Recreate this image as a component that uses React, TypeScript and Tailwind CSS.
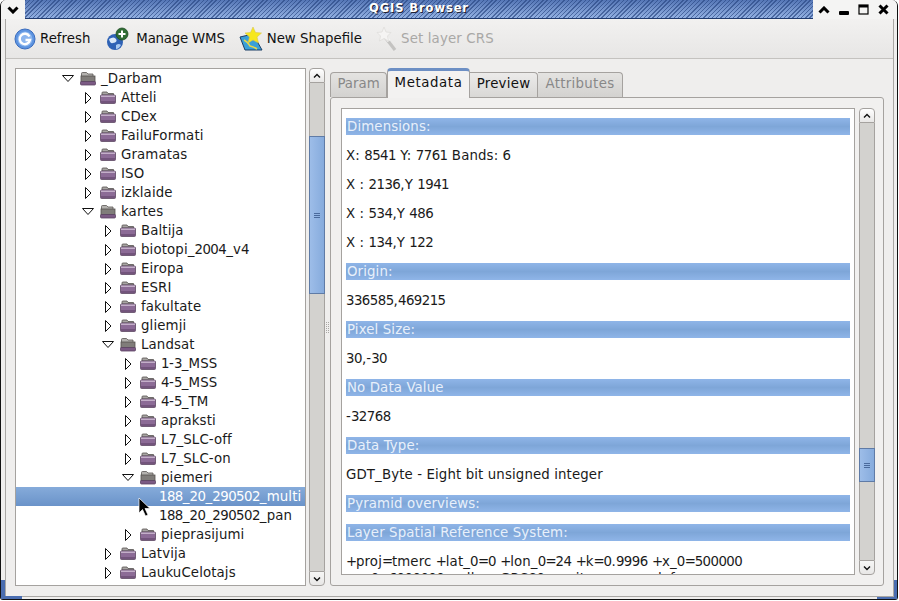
import React from "react";

type TreeRow = { label: string; indent: number; open?: boolean; leaf?: boolean; selected?: boolean };

const treeRows: TreeRow[] = [
  { label: "_Darbam", indent: 45, open: true },
  { label: "Atteli", indent: 65 },
  { label: "CDex", indent: 65 },
  { label: "FailuFormati", indent: 65 },
  { label: "Gramatas", indent: 65 },
  { label: "ISO", indent: 65 },
  { label: "izklaide", indent: 65 },
  { label: "kartes", indent: 65, open: true },
  { label: "Baltija", indent: 85 },
  { label: "biotopi_2004_v4", indent: 85 },
  { label: "Eiropa", indent: 85 },
  { label: "ESRI", indent: 85 },
  { label: "fakultate", indent: 85 },
  { label: "gliemji", indent: 85 },
  { label: "Landsat", indent: 85, open: true },
  { label: "1-3_MSS", indent: 105 },
  { label: "4-5_MSS", indent: 105 },
  { label: "4-5_TM", indent: 105 },
  { label: "apraksti", indent: 105 },
  { label: "L7_SLC-off", indent: 105 },
  { label: "L7_SLC-on", indent: 105 },
  { label: "piemeri", indent: 105, open: true },
  { label: "188_20_290502_multi", indent: 143, leaf: true, selected: true },
  { label: "188_20_290502_pan", indent: 143, leaf: true },
  { label: "pieprasijumi", indent: 105 },
  { label: "Latvija", indent: 85 },
  { label: "LaukuCelotajs", indent: 85 },
];

const metaRows: { text: string; head?: boolean }[] = [
  { text: "Dimensions:", head: true },
  { text: "X: 8541 Y: 7761 Bands: 6" },
  { text: "X : 2136,Y 1941" },
  { text: "X : 534,Y 486" },
  { text: "X : 134,Y 122" },
  { text: "Origin:", head: true },
  { text: "336585,469215" },
  { text: "Pixel Size:", head: true },
  { text: "30,-30" },
  { text: "No Data Value", head: true },
  { text: "-32768" },
  { text: "Data Type:", head: true },
  { text: "GDT_Byte - Eight bit unsigned integer" },
  { text: "Pyramid overviews:", head: true },
  { text: "Layer Spatial Reference System:", head: true },
];

// the screenshot font is hinted: digits and +/= come out narrower than ours
function Txt({ text }: { text: string }) {
  const parts = text.split(/(\d+|[+=]+)/).filter(Boolean);
  return (
    <span className="tracking-[0.12px]">
      {parts.map((p, i) =>
        /\d/.test(p) ? (
          <span key={i} className="tracking-[-0.55px]">{p}</span>
        ) : /[+=]/.test(p) ? (
          <span key={i} className="tracking-[-1.2px]">{p}</span>
        ) : (
          <span key={i}>{p}</span>
        )
      )}
    </span>
  );
}

function Folder({ open }: { open?: boolean }) {
  if (open) {
    return (
      <svg width="16" height="15" viewBox="0 0 16 15" className="shrink-0">
        <path d="M1.5 2.5 Q1.5 1.5 2.5 1.5 L6.5 1.5 L8 3 L13 3 L13 6 L1.5 6 Z" fill="#b4b2af" stroke="#5a5754" strokeWidth="0.8" />
        <rect x="1" y="5" width="14" height="6" fill="#807d7a" stroke="#55524f" strokeWidth="0.8" />
        <rect x="0.5" y="10.5" width="15" height="3.5" rx="1" fill="#7b5a84" stroke="#5a4262" strokeWidth="0.8" />
      </svg>
    );
  }
  return (
    <svg width="16" height="13" viewBox="0 0 16 13" className="shrink-0">
      <path d="M2 4 L2 1.8 Q2 1 3 1 L7 1 L8 2.5 L13.5 2.5 L13.5 4 Z" fill="#a8a6a3" stroke="#55524f" strokeWidth="0.8" />
      <rect x="0.5" y="4" width="15" height="8.5" rx="1" fill="#8c6b96" stroke="#5d4862" strokeWidth="0.8" />
      <rect x="1" y="4.5" width="14" height="1.5" fill="#c4afc9" />
      <rect x="1" y="10" width="14" height="2" fill="#73547c" />
    </svg>
  );
}

function Arrow({ open }: { open?: boolean }) {
  return open ? (
    <svg width="14" height="10" viewBox="0 0 14 10" className="shrink-0">
      <path d="M1.5 1.5 H12.5 L7 7.5 Z" fill="#fff" stroke="#111" strokeWidth="1" />
    </svg>
  ) : (
    <svg width="10" height="14" viewBox="0 0 10 14" className="shrink-0">
      <path d="M2.5 1.5 V12.5 L8 7 Z" fill="#fff" stroke="#111" strokeWidth="1" />
    </svg>
  );
}

function Row({ row }: { row: TreeRow }) {
  return (
    <div
      className={`h-[19px] flex items-center shrink-0 whitespace-nowrap ${
        row.selected ? "bg-gradient-to-b from-[#86abda] to-[#6a93c9] text-white" : "text-[#1a1a1a]"
      }`}
      style={{ paddingLeft: row.indent }}
    >
      {!row.leaf && (
        <div className="w-[14px] flex justify-center shrink-0">
          <Arrow open={row.open} />
        </div>
      )}
      {!row.leaf && (
        <div className="ml-[5px] mr-[5px] flex">
          <Folder open={row.open} />
        </div>
      )}
      <Txt text={row.label} />
    </div>
  );
}

function ScrollBar({ children }: { children: React.ReactNode }) {
  return (
    <div className="w-[16px] h-full flex flex-col shrink-0">
      <div className="h-[15px] border border-[#a5a29f] rounded-t-[4px] bg-gradient-to-b from-white to-[#e8e7e6] flex items-center justify-center shrink-0">
        <svg width="8" height="6" viewBox="0 0 8 6"><path d="M1 4.5 L4 1.5 L7 4.5" fill="none" stroke="#111" strokeWidth="1.4" /></svg>
      </div>
      <div className="flex-1 bg-[#d3d2cf] border-x border-[#a5a29f] flex flex-col min-h-0">{children}</div>
      <div className="h-[15px] border border-[#a5a29f] rounded-b-[4px] bg-gradient-to-b from-[#f6f6f5] to-[#e8e7e6] flex items-center justify-center shrink-0">
        <svg width="8" height="6" viewBox="0 0 8 6"><path d="M1 1.5 L4 4.5 L7 1.5" fill="none" stroke="#111" strokeWidth="1.4" /></svg>
      </div>
    </div>
  );
}

function Thumb({ height }: { height: string }) {
  return (
    <div className={`${height} -mx-px border border-[#5f7ba6] bg-gradient-to-r from-[#9dbde8] to-[#86abdd] flex flex-col items-center justify-center gap-px shrink-0`}>
      <div className="w-[6px] h-px bg-[#4a6a9c]" />
      <div className="w-[6px] h-px bg-[#4a6a9c]" />
      <div className="w-[6px] h-px bg-[#4a6a9c]" />
    </div>
  );
}

function ToolButton({ icon, label, disabled, className }: { icon: React.ReactNode; label: string; disabled?: boolean; className: string }) {
  return (
    <div className={`flex items-center ${className} ${disabled ? "text-[#a9a8a6]" : "text-[#111]"}`}>
      {icon}
      <span>{label}</span>
    </div>
  );
}

const refreshIcon = (
  <svg width="24" height="24" viewBox="0 0 24 24">
    <circle cx="12" cy="12" r="10" fill="#5d94e0" stroke="#3a6cbe" strokeWidth="1" />
    <circle cx="12" cy="12" r="7.5" fill="#8db6ee" />
    <path d="M16.5 9.5 A5.2 5.2 0 1 0 17 13 L12.5 13" fill="none" stroke="#fff" strokeWidth="2.4" />
  </svg>
);

const wmsIcon = (
  <svg width="24" height="24" viewBox="0 0 24 24">
    <circle cx="10" cy="15" r="8" fill="#2f62b5" />
    <path d="M4 12 Q9 9 11 12 Q13 15 8 16 Q5 17 4 12 Z" fill="#dbe8f7" />
    <path d="M11 18 Q14 16 16 18 Q14 22 11 22 Z" fill="#a9c9ef" />
    <circle cx="17" cy="7" r="6" fill="#2f6d33" stroke="#1d4a22" strokeWidth="0.8" />
    <path d="M17 3.5 V10.5 M13.5 7 H20.5" stroke="#fff" strokeWidth="2" />
  </svg>
);

const shapeIcon = (
  <svg width="24" height="26" viewBox="0 0 24 26">
    <path d="M1 11 L14 8 L23 24 L6 24 Z" fill="#39a0d8" stroke="#1d3f66" strokeWidth="1" />
    <path d="M5 14 Q9 16 11 20 Q15 21 18 23" fill="none" stroke="#e6d64a" strokeWidth="1.6" />
    <path d="M14 1 L16.5 6.5 L22.5 7 L18 11 L19.5 17 L14 14 L9 17 L10.5 11 L6 7 L11.5 6.5 Z" fill="#f6e71f" stroke="#d8c64a" strokeWidth="0.6" />
  </svg>
);

const wandIcon = (
  <svg width="24" height="26" viewBox="0 0 24 26">
    <path d="M10 11 L20 24" stroke="#c4c3c1" strokeWidth="3.2" />
    <path d="M10 10 L14 15" stroke="#f6f6f5" strokeWidth="3.4" />
    <path d="M9 1 L11 6 L16 6.5 L12.5 10 L13.5 15 L9 12.5 L4.5 15 L5.5 10 L2 6.5 L7 6 Z" fill="#f5f4f3" stroke="#dcdbd9" strokeWidth="0.7" />
  </svg>
);

export default function App() {
  return (
    <div className="relative w-[899px] h-[601px] overflow-hidden bg-white text-[13.33px] font-['DejaVu_Sans',sans-serif]">
      <div className="h-[600px] w-[898px] rounded-t-[6px] rounded-b-[3px] bg-[#efeeed] flex flex-col border-x border-b border-[#111] overflow-hidden">
        {/* title bar */}
        <div className="h-[19px] flex shrink-0 bg-[#f4f4f3]">
          <div className="w-[24px] flex items-center justify-center">
            <svg width="12" height="8" viewBox="0 0 12 8"><path d="M1.5 1.5 L6 6 L10.5 1.5" fill="none" stroke="#000" strokeWidth="3" /></svg>
          </div>
          <div className="relative flex-1 border-b border-[#1f3a6e] flex items-center justify-center bg-[repeating-linear-gradient(135deg,rgba(40,70,130,0.65)_0,rgba(40,70,130,0.65)_1px,transparent_1px,transparent_3px),linear-gradient(180deg,#5576b6,#93b1e2)]">
            <span className="text-white font-bold text-[11.5px] tracking-[0.9px] [text-shadow:1px_1px_0_#223]">QGIS Browser</span>
          </div>
          <div className="w-[84px] flex items-center justify-around pr-[4px] pl-[1px]">
            <svg width="12" height="8" viewBox="0 0 12 8"><path d="M1.5 6.5 L6 2 L10.5 6.5" fill="none" stroke="#000" strokeWidth="3" /></svg>
            <svg width="10" height="8" viewBox="0 0 10 8" className="mt-[3px]"><rect x="0" y="4" width="10" height="4" rx="1" fill="#000" /></svg>
            <svg width="11" height="11" viewBox="0 0 11 11"><rect x="1" y="1" width="9" height="9" fill="none" stroke="#000" strokeWidth="1.2" /><rect x="1" y="1" width="9" height="2.5" fill="#000" /></svg>
            <svg width="11" height="11" viewBox="0 0 11 11"><path d="M1.5 1.5 L9.5 9.5 M9.5 1.5 L1.5 9.5" stroke="#000" strokeWidth="3" /></svg>
          </div>
        </div>

        {/* client area with the thin frame line */}
        <div className="h-[578px] ml-[4px] mr-[3px] shrink-0 border-x border-b border-[#a9a7a4] flex flex-col">
          {/* toolbar */}
          <div className="h-[40px] flex items-center shrink-0 border-b border-[#c4c2bf] bg-gradient-to-b from-[#f2f1f0] to-[#e7e6e5]">
            <ToolButton icon={refreshIcon} label="Refresh" className="ml-[7px] gap-[3px]" />
            <ToolButton icon={wmsIcon} label="Manage WMS" className="ml-[15px] gap-[7px] tracking-[-0.2px]" />
            <ToolButton icon={shapeIcon} label="New Shapefile" className="ml-[14px] gap-[4px]" />
            <ToolButton icon={wandIcon} label="Set layer CRS" disabled className="ml-[13px] gap-[2px] tracking-[0.15px]" />
          </div>

          {/* main split */}
          <div className="flex-1 min-h-0 flex pl-[9px] pr-[9px] pt-[9px] pb-[10px]">
            <div className="w-[291px] h-full border border-[#a5a29f] bg-white flex flex-col overflow-hidden shrink-0">
              {treeRows.map((r) => (
                <Row key={r.label} row={r} />
              ))}
            </div>
            <div className="ml-[3px]">
              <ScrollBar>
                <div className="h-[53px] shrink-0" />
                <Thumb height="h-[158px]" />
              </ScrollBar>
            </div>

            {/* splitter grip */}
            <div className="w-[5px] shrink-0 flex items-center justify-center">
              <div className="grid grid-cols-2 gap-px">
                {Array.from({ length: 12 }).map((_, i) => (
                  <div key={i} className="w-px h-px bg-[#a9a7a4]" />
                ))}
              </div>
            </div>

            <div className="flex-1 min-w-0 flex flex-col">
              {/* tabs */}
              <div className="h-[29px] flex items-end shrink-0">
                <div className="h-[25px] w-[57px] pb-[2px] border border-[#a5a29f] border-b-0 rounded-t-[4px] bg-gradient-to-b from-[#e4e3e1] to-[#d3d2d0] text-[#888] flex items-center justify-center">Param</div>
                <div className="relative z-10 h-[30px] w-[83px] -mb-px border border-[#a5a29f] border-b-0 border-t-[3px] border-t-[#6d8fc4] rounded-t-[4px] bg-[#f3f2f1] text-[#111] tracking-[0.6px] flex items-center justify-center pb-[3px]">Metadata</div>
                <div className="h-[25px] w-[68px] pb-[2px] border-r border-t border-[#a5a29f] rounded-tr-[4px] bg-gradient-to-b from-[#ecebea] to-[#d9d8d6] text-[#111] tracking-[0.25px] flex items-center justify-center">Preview</div>
                <div className="h-[25px] w-[85px] pb-[2px] border-r border-t border-[#a5a29f] rounded-tr-[4px] bg-gradient-to-b from-[#e4e3e1] to-[#d3d2d0] text-[#888] tracking-[0.3px] flex items-center justify-center">Attributes</div>
              </div>
              {/* tab page */}
              <div className="flex-1 min-h-0 border border-[#a5a29f] rounded-[3px] bg-[#f1f0ef] pl-[10px] pt-[10px] pb-[10px] flex">
                <div className="w-[514px] h-full border border-[#a5a29f] bg-white overflow-hidden shrink-0 px-[4px] pt-[9px] text-[#1a1a1a]">
                  {metaRows.map((m) =>
                    m.head ? (
                      <div key={m.text} className="h-[17px] mb-[12px] px-px flex items-center text-[#e8f0fb] whitespace-nowrap bg-[linear-gradient(180deg,#8fb5e8_0%,#7ea6d8_50%,#8fb5e8_100%)]">
                        <Txt text={m.text} />
                      </div>
                    ) : (
                      <div key={m.text} className="h-[17px] mb-[12px] flex items-center whitespace-nowrap">
                        <Txt text={m.text} />
                      </div>
                    )
                  )}
                  <div className="h-[17px] flex items-center whitespace-nowrap">
                    <Txt text="+proj=tmerc +lat_0=0 +lon_0=24 +k=0.9996 +x_0=500000" />
                  </div>
                  <div className="h-[17px] flex items-center whitespace-nowrap">
                    <Txt text="+y_0=6000000 +ellps=GRS80 +units=m +no_defs" />
                  </div>
                </div>
                <div className="ml-[4px]">
                  <ScrollBar>
                    <div className="h-[325px] shrink-0" />
                    <Thumb height="h-[34px]" />
                  </ScrollBar>
                </div>
              </div>
            </div>
          </div>
        </div>
      </div>

      {/* resize corners of the window frame */}
      <div className="absolute left-[1px] top-[580px] w-[4px] h-[19px] bg-[#4a6db0]" />
      <div className="absolute left-[1px] top-[596px] w-[21px] h-[3px] bg-[#4a6db0]" />
      <div className="absolute left-[894px] top-[580px] w-[3px] h-[19px] bg-[#4a6db0]" />
      <div className="absolute left-[877px] top-[597px] w-[20px] h-[2px] bg-[#4a6db0]" />

      {/* mouse pointer */}
      <svg width="14" height="22" viewBox="0 0 14 22" className="absolute left-[138px] top-[497px]">
        <path d="M1 1 L1 16 L4.5 12.5 L7.5 19 L10 18 L7 11.5 L12 11.5 Z" fill="#000" stroke="#fff" strokeWidth="0.7" />
      </svg>
    </div>
  );
}
